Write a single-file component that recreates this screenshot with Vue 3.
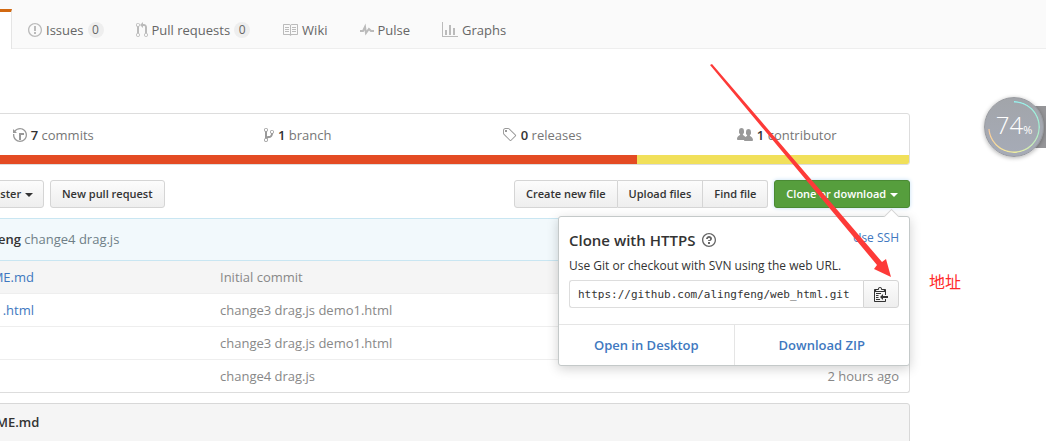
<script setup>
const icons = {
  issue: { w: 14, d: 'M7 2.3c3.14 0 5.7 2.56 5.7 5.7s-2.56 5.7-5.7 5.7A5.71 5.71 0 0 1 1.3 8c0-3.14 2.56-5.7 5.7-5.7zM7 1C3.14 1 0 4.14 0 8s3.14 7 7 7 7-3.14 7-7-3.14-7-7-7zm1 3H6v5h2V4zm0 6H6v2h2v-2z' },
  pull: { w: 12, d: 'M11 11.28V5c-.03-.78-.34-1.47-.94-2.06C9.46 2.35 8.78 2.03 8 2H7V0L4 3l3 3V4h1c.27.02.48.11.69.31.21.2.3.42.31.69v6.28A1.993 1.993 0 0 0 10 15a1.993 1.993 0 0 0 1-3.72zm-1 2.92c-.66 0-1.2-.55-1.2-1.2 0-.65.55-1.2 1.2-1.2.65 0 1.2.55 1.2 1.2 0 .65-.55 1.2-1.2 1.2zM4 3c0-1.11-.89-2-2-2a1.993 1.993 0 0 0-1 3.72v6.56A1.993 1.993 0 0 0 2 15a1.993 1.993 0 0 0 1-3.72V4.72c.59-.34 1-.98 1-1.72zm-.8 10c0 .66-.55 1.2-1.2 1.2-.65 0-1.2-.55-1.2-1.2 0-.65.55-1.2 1.2-1.2.65 0 1.2.55 1.2 1.2zM2 4.2C1.34 4.2.8 3.65.8 3c0-.65.55-1.2 1.2-1.2.65 0 1.2.55 1.2 1.2 0 .65-.55 1.2-1.2 1.2z' },
  book: { w: 16, d: 'M3 5h4v1H3V5zm0 3h4V7H3v1zm0 2h4V9H3v1zm11-5h-4v1h4V5zm0 2h-4v1h4V7zm0 2h-4v1h4V9zm2-6v9c0 .55-.45 1-1 1H9.5l-1 1-1-1H2c-.55 0-1-.45-1-1V3c0-.55.45-1 1-1h5.5l1 1 1-1H15c.55 0 1 .45 1 1zm-8 .5L7.5 3H2v9h6V3.5zm7-.5H9.5l-.5.5V12h6V3z' },
  pulse: { w: 14, d: 'M11.5 8L8.8 5.4 6.6 8.5 5.5 1.6 2.38 8H0v2h3.6l.9-1.8.9 5.4L9 8.5l1.6 1.5H14V8h-2.5z' },
  graph: { w: 16, d: 'M16 14v1H0V0h1v14h15zM5 13H3V8h2v5zm4 0H7V3h2v10zm4 0h-2V6h2v7z' },
  history: { w: 14, d: 'M8 13H6V6h5v2H8v5zM7 1C4.81 1 2.87 2.02 1.59 3.59L0 2v4h4L2.5 4.5C3.55 3.17 5.17 2.3 7 2.3c3.14 0 5.7 2.56 5.7 5.7s-2.56 5.7-5.7 5.7A5.71 5.71 0 0 1 1.3 8c0-.34.03-.67.09-1H.08C.03 7.33 0 7.66 0 8c0 3.86 3.14 7 7 7s7-3.14 7-7-3.14-7-7-7z' },
  branch: { w: 10, d: 'M10 5c0-1.11-.89-2-2-2a1.993 1.993 0 0 0-1 3.72v.3c-.02.52-.23.98-.63 1.38-.4.4-.86.61-1.38.63-.83.02-1.48.16-2 .45V4.72a1.993 1.993 0 0 0-1-3.72C.88 1 0 1.89 0 3a2 2 0 0 0 1 1.72v6.56c-.59.35-1 .99-1 1.72 0 1.11.89 2 2 2 1.11 0 2-.89 2-2 0-.53-.2-1-.53-1.36.09-.06.48-.41.59-.47.25-.11.56-.17.94-.17 1.05-.05 1.95-.45 2.75-1.25S8.95 7.77 9 6.73h-.02C9.59 6.37 10 5.73 10 5zM2 1.8c.66 0 1.2.55 1.2 1.2 0 .65-.55 1.2-1.2 1.2C1.35 4.2.8 3.65.8 3c0-.65.55-1.2 1.2-1.2zm0 12.41c-.66 0-1.2-.55-1.2-1.2 0-.65.55-1.2 1.2-1.2.65 0 1.2.55 1.2 1.2 0 .65-.55 1.2-1.2 1.2zm6-8c-.66 0-1.2-.55-1.2-1.2 0-.65.55-1.2 1.2-1.2.65 0 1.2.55 1.2 1.2 0 .65-.55 1.2-1.2 1.2z' },
  tag: { w: 14, d: 'M6.73 1.73C6.26 1.26 5.62 1 4.96 1H2.5C1.13 1 0 2.13 0 3.5v2.47c0 .66.27 1.3.73 1.77l6.06 6.06c.39.39 1.02.39 1.41 0l4.59-4.59a.996.996 0 0 0 0-1.41L6.73 1.73zM1.38 7.09A1.45 1.45 0 0 1 .94 6V3.5c0-.86.7-1.56 1.56-1.56h2.48c.41 0 .8.16 1.09.44l6.13 6.13-4.69 4.69-6.13-6.11zM2 3h2v2H2V3z' },
  people: { w: 16, d: 'M16 12.999c0 .439-.45 1-1 1H7.995c-.539 0-.994-.447-.995-.999H1c-.54 0-1-.561-1-1 0-2.634 3-4 3-4s.229-.409 0-1c-.841-.621-1.058-.59-1-3 .058-2.419 1.367-3 2.5-3s2.442.58 2.5 3c.058 2.41-.159 2.379-1 3-.229.59 0 1 0 1s1.549.711 2.42 2.088C9.196 9.369 10 8.999 10 8.999s.229-.409 0-1c-.841-.62-1.058-.59-1-3 .058-2.419 1.367-3 2.5-3s2.437.581 2.495 3c.059 2.41-.158 2.38-1 3-.229.59 0 1 0 1s3.005 1.366 3.005 4z' },
}
const tabs = [
  { icon: 'issue', label: 'Issues', count: 0 },
  { icon: 'pull', label: 'Pull requests', count: 0 },
  { icon: 'book', label: 'Wiki' },
  { icon: 'pulse', label: 'Pulse' },
  { icon: 'graph', label: 'Graphs' },
]
const stats = [
  { icon: 'history', count: 7, label: 'commits' },
  { icon: 'branch', count: 1, label: 'branch' },
  { icon: 'tag', count: 0, label: 'releases' },
  { icon: 'people', count: 1, label: 'contributor' },
]
const files = [
  { name: 'ME.md', message: 'Initial commit', age: '' },
  { name: '.html', message: 'change3 drag.js demo1.html', age: '' },
  { name: '', message: 'change3 drag.js demo1.html', age: '' },
  { name: '', message: 'change4 drag.js', age: '2 hours ago' },
]
const cloneUrl = 'https://github.com/alingfeng/web_html.git'
</script>

<template>
  <div class="page">
    <nav class="tabs">
      <span class="active-tab"></span>
      <a v-for="t in tabs" :key="t.label" href="#" class="tab">
        <svg :width="icons[t.icon].w" height="16" :viewBox="`0 0 ${icons[t.icon].w} 16`"><path :d="icons[t.icon].d" /></svg>
        <span>{{ t.label }}</span>
        <span v-if="t.count !== undefined" class="counter">{{ t.count }}</span>
      </a>
    </nav>

    <main class="content">
      <section class="summary">
        <div class="stats">
          <a v-for="s in stats" :key="s.label" href="#" class="stat">
            <svg :width="icons[s.icon].w" height="16" :viewBox="`0 0 ${icons[s.icon].w} 16`"><path :d="icons[s.icon].d" /></svg>
            <span><b>{{ s.count }}</b> {{ s.label }}</span>
          </a>
        </div>
        <div class="languages"><span class="html"></span><span class="js"></span></div>
      </section>

      <div class="toolbar">
        <button type="button" class="btn branch-btn">aster <i class="caret"></i></button>
        <button type="button" class="btn">New pull request</button>
        <div class="group">
          <button type="button" class="btn">Create new file</button>
          <button type="button" class="btn">Upload files</button>
          <button type="button" class="btn">Find file</button>
        </div>
        <div class="clone">
          <button type="button" class="btn primary">Clone or download <i class="caret"></i></button>
          <div class="popover">
            <div class="popover-body">
              <div class="popover-head">
                <h2>Clone with HTTPS</h2>
                <a href="#" class="help" aria-label="Help">
                  <svg width="14" height="16" viewBox="0 0 14 16"><path d="M6 10h2v2H6v-2zm4-3.5C10 8.64 8 9 8 9H6c0-.55.45-1 1-1h.5c.28 0 .5-.22.5-.5v-1c0-.28-.22-.5-.5-.5h-1c-.28 0-.5.22-.5.5V7H4c0-1.5 1.5-3 3-3s3 1 3 2.5zM7 2.3c3.14 0 5.7 2.56 5.7 5.7s-2.56 5.7-5.7 5.7A5.71 5.71 0 0 1 1.3 8c0-3.14 2.56-5.7 5.7-5.7zM7 1C3.14 1 0 4.14 0 8s3.14 7 7 7 7-3.14 7-7-3.14-7-7-7z" /></svg>
                </a>
                <a href="#" class="ssh">Use SSH</a>
              </div>
              <label for="clone-url">Use Git or checkout with SVN using the web URL.</label>
              <div class="url-row">
                <input id="clone-url" type="text" readonly :value="cloneUrl" />
                <button type="button" class="btn copy" aria-label="Copy">
                  <svg width="14" height="16" viewBox="0 0 14 16"><path d="M2 13h4v1H2v-1zm5-6H2v1h5V7zm2 3V8l-3 3 3 3v-2h5v-2H9zM4.500 9H2v1h2.500V9zM2 12h2.500v-1H2v1zm9 1h1v2c-.02.28-.11.52-.3.7-.19.18-.42.28-.7.3H1c-.55 0-1-.45-1-1V4c0-.55.45-1 1-1h3c0-1.110.89-2 2-2 1.110 0 2 .89 2 2h3c.55 0 1 .45 1 1v5h-1V6H1v9h10v-2zM2 5h8c0-.55-.45-1-1-1H8c-.55 0-1-.45-1-1s-.45-1-1-1-1 .45-1 1-.45 1-1 1H3c-.55 0-1 .45-1 1z" /></svg>
                </button>
              </div>
            </div>
            <div class="popover-actions">
              <a href="#">Open in Desktop</a>
              <a href="#">Download ZIP</a>
            </div>
          </div>
        </div>
      </div>

      <section class="files">
        <div class="latest"><a href="#">eng</a> <span>change4 drag.js</span></div>
        <table>
          <tbody>
            <tr v-for="(f, i) in files" :key="i">
              <td class="name"><a v-if="f.name" href="#">{{ f.name }}</a></td>
              <td class="message">{{ f.message }}</td>
              <td class="age">{{ f.age }}</td>
            </tr>
          </tbody>
        </table>
      </section>

      <section class="readme"><h3>ME.md</h3></section>
    </main>

    <span class="note">地址</span>
    <svg class="arrow" width="182" height="215" viewBox="0 0 182 215"><path d="M0 1 L2 0 L172 198 L176 195 L181 213 L164 205 L167 201Z" /></svg>

    <aside class="meter">
      <div class="dial">
        <span class="ring"></span>
        <span class="percent">74<small>%</small></span>
      </div>
    </aside>
  </div>
</template>

<style>
body { margin: 0; background: #fff; }
</style>

<style scoped>
* { box-sizing: border-box; }
.page {
  position: relative;
  overflow: hidden;
  min-height: 100vh;
  font: 13px/20px "Open Sans", "Noto Sans", sans-serif;
  color: #333;
}
a { color: #4078c0; text-decoration: none; }
svg { flex: none; display: block; fill: currentColor; }

.tabs {
  display: flex;
  align-items: flex-end;
  gap: 32px;
  height: 49px;
  background: #fafafa;
  border-bottom: 1px solid #eee;
}
.active-tab {
  width: 12px;
  height: 40px;
  margin: 0 -16px -1px 0;
  background: #fff;
  border-top: 3px solid #d26911;
  border-right: 1px solid #e5e5e5;
}
.tab { display: flex; align-items: center; gap: 4px; height: 36px; color: #666; }
.tab svg { color: #bbb; }
.counter {
  min-width: 16px;
  font-size: 12px;
  font-weight: 500;
  line-height: 16px;
  text-align: center;
  background: #eee;
  border-radius: 8px;
}

.content { margin: 64px 136px 0 -70px; }
.summary { border: 1px solid #ddd; border-radius: 3px; overflow: hidden; }
.stats { display: flex; height: 41px; }
.stat { flex: 1; display: flex; align-items: center; justify-content: center; gap: 4px; color: #767676; }
.stat svg { color: #999; }
.stat b { font-weight: 600; color: #333; }
.languages { display: flex; height: 9px; }
.html { flex: 721; background: #e44b23; }
.js { flex: 278; background: #f1e05a; }

.toolbar { display: flex; gap: 6px; margin-top: 15px; }
.btn {
  height: 28px;
  padding: 0 11px;
  font: 600 11px/20px "Open Sans", "Noto Sans", sans-serif;
  color: #333;
  white-space: nowrap;
  background: linear-gradient(#fcfcfc, #eee);
  border: 1px solid #d5d5d5;
  border-radius: 3px;
}
.branch-btn { width: 114px; padding: 0 10px; text-align: right; }
.caret {
  display: inline-block;
  margin-left: 1px;
  vertical-align: middle;
  border: 4px solid transparent;
  border-top-color: currentColor;
  border-bottom: 0;
}
.group { display: flex; margin-left: auto; }
.group .btn { border-radius: 0; }
.group .btn + .btn { border-left: 0; }
.group .btn:first-child { border-radius: 3px 0 0 3px; }
.group .btn:last-child { border-radius: 0 3px 3px 0; }
.clone { position: relative; }
.primary {
  color: #fff;
  background: #569e3d;
  border-color: #4a8a34;
  box-shadow: 0 0 4px #c3dff5;
}

.popover {
  position: absolute;
  z-index: 2;
  top: 36px;
  right: 0;
  width: 352px;
  background: #fff;
  border: 1px solid #c4c9c9;
  border-radius: 3px;
  box-shadow: 0 3px 12px rgba(0, 0, 0, 0.18);
}
.popover::before {
  content: "";
  position: absolute;
  top: -6px;
  right: 12px;
  width: 10px;
  height: 10px;
  background: #fff;
  border: 1px solid #d5d5d5;
  border-right: 0;
  border-bottom: 0;
  transform: rotate(45deg);
}
.popover-body { padding: 12px 10px 16px; }
.popover-head { display: flex; align-items: center; gap: 7px; }
h2 { margin: 0; font-size: 15px; font-weight: 600; line-height: 22px; }
.help { color: #666; }
.ssh { align-self: flex-start; margin-left: auto; font-size: 12px; line-height: 18px; }
label { display: block; margin: 5px 0 4px; font-size: 12px; line-height: 20px; }
.url-row { display: flex; }
input {
  flex: 1;
  min-width: 0;
  height: 28px;
  padding: 0 8px;
  font: 11px "DejaVu Sans Mono", monospace;
  color: #333;
  border: 1px solid #ddd;
  border-right: 0;
  border-radius: 3px 0 0 3px;
}
.copy { padding: 0 10px; border-radius: 0 3px 3px 0; }
.popover-actions { display: flex; border-top: 1px solid #e5e5e5; }
.popover-actions a { flex: 1; font-weight: 600; line-height: 40px; text-align: center; }
.popover-actions a + a { border-left: 1px solid #e5e5e5; }

.files { margin-top: 10px; border: 1px solid #ddd; border-top-color: #c9e6f2; border-radius: 3px; }
.latest {
  height: 42px;
  padding-left: 67px;
  line-height: 41px;
  color: #6f7f87;
  background: #f2f9fc;
  border-bottom: 1px solid #c9e6f2;
}
.latest a { font-weight: 600; color: #333; }
table { width: 100%; table-layout: fixed; border-collapse: separate; border-spacing: 0; }
td { height: 33px; padding: 0; color: #888; border-top: 1px solid #eee; }
tr:first-child { background: #f5f5f5; }
tr:first-child td { height: 32px; border-top: 0; }
td.name { width: 289px; padding-right: 186px; text-align: right; }
td.age { width: 120px; padding-right: 10px; text-align: right; }
.readme {
  min-height: 60px;
  margin: 10px 0 -30px;
  padding: 8px 65px;
  background: #f5f5f5;
  border: 1px solid #d8d8d8;
  border-radius: 3px 3px 0 0;
}
h3 { margin: 0; font-size: 13px; font-weight: 600; line-height: 20px; }

.note {
  position: absolute;
  top: 269px;
  right: 85px;
  font: 400 16px/24px "Noto Sans CJK SC", sans-serif;
  color: #ff2a2a;
}
.arrow { position: absolute; z-index: 3; top: 64px; right: 154px; color: #fd3a38; }

.meter {
  position: absolute;
  top: 106px;
  right: 0;
  width: 30px;
  height: 42px;
  background: #959598;
}
.dial {
  position: absolute;
  top: -9px;
  right: 2px;
  display: flex;
  align-items: center;
  justify-content: center;
  width: 60px;
  height: 60px;
  background: linear-gradient(#a2a5aa, #a6abb7);
  border: 1px solid #999ba0;
  border-radius: 50%;
  box-shadow: 0 1px 4px rgba(0, 0, 0, 0.3);
}
.ring {
  position: absolute;
  inset: 3px;
  border-radius: 50%;
  background: conic-gradient(#96f1ef, #a4edd0 90deg, #efed9f 180deg, #fbc99a 266deg, transparent 266deg);
  mask: radial-gradient(circle, transparent 24px, #000 25px);
}
.percent { font: 300 24px/30px "Open Sans", sans-serif; color: #fff; }
small { font-size: 11px; font-weight: 400; }
</style>
